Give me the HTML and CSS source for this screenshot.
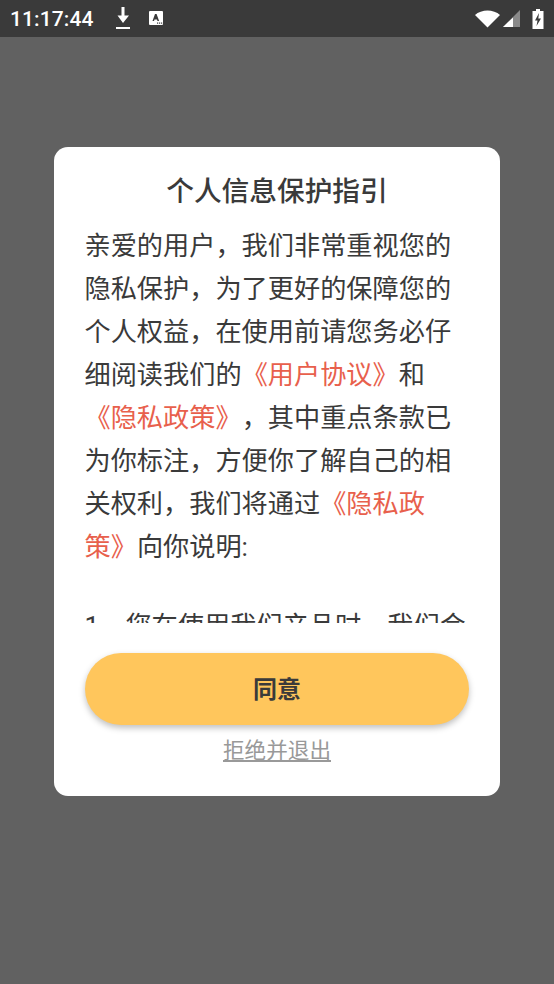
FILE: index.html
```html
<!DOCTYPE html>
<html lang="zh-CN">
<head>
    <meta charset="UTF-8">
    <meta name="viewport" content="width=device-width, initial-scale=1.0">
    <title>个人信息保护指引</title>
    <link rel="stylesheet" href="styles.css">
</head>
<body>
    <div class="status-bar">
        <div class="status-left">
            <span class="clock">11:17:44</span>
            <svg class="icon-download" width="16" height="22" viewBox="0 0 16 22">
                <path d="M6.500 0h3v8.500H14L8 16 2.500 8.500h4z" fill="#fff"/>
                <rect x="1" y="20" width="14" height="2" fill="#fff"/>
            </svg>
            <svg class="icon-app" width="16" height="16" viewBox="0 0 16 16">
                <rect x="1" y="1" width="14" height="14" rx="1" fill="#fff"/>
                <path d="M4.500 11l2.500-7h1.600l2.500 7H9.500L9 9.400H6.500L6 11z" fill="#3a3a3a"/>
                <rect x="9" y="12.500" width="1.200" height="1.200" fill="#3a3a3a"/>
                <rect x="11" y="12.500" width="1.200" height="1.200" fill="#3a3a3a"/>
                <rect x="13" y="12.500" width="1.200" height="1.200" fill="#3a3a3a"/>
            </svg>
        </div>
        <div class="status-right">
            <svg width="26" height="18" viewBox="0 0 26 18">
                <path d="M0 5C3 2 8 .5 12.500.5S22 2 25 5L12.500 17.500z" fill="#fff"/>
            </svg>
            <svg class="icon-signal" width="18" height="18" viewBox="0 0 18 18">
                <path d="M17 0v17H0z" fill="#8a8a8a"/>
                <path d="M10 7.500V17H0z" fill="#fff"/>
            </svg>
            <svg class="icon-battery" width="12" height="20" viewBox="0 0 12 20">
                <path d="M4 0h4v2h3.500v18H.500V2H4z" fill="#fff"/>
                <path d="M7 4L3 11.500h2.500L4.500 17 9 9.500H6.300z" fill="#3a3a3a"/>
            </svg>
        </div>
    </div>

    <div class="page">
        <div class="dialog">
            <h1>个人信息保护指引</h1>
            <div class="content">
                <p>亲爱的用户，我们非常重视您的隐私保护，为了更好的保障您的个人权益，在使用前请您务必仔细阅读我们的<a>《用户协议》</a>和<a>《隐私政策》</a>，其中重点条款已为你标注，方便你了解自己的相关权利，我们将通过<a>《隐私政策》</a>向你说明:</p>
                <p>1、您在使用我们产品时，我们会</p>
            </div>
            <button class="agree">同意</button>
            <a class="refuse">拒绝并退出</a>
        </div>
    </div>
</body>
</html>
```

FILE: styles.css
```css
* {
    box-sizing: border-box;
}
body {
    margin: 0;
    height: 984px;
    overflow: hidden;
    background-color: #616161;
    font-family: Roboto, "Noto Sans CJK SC", sans-serif;
    color: #3a3a3a;
}
.status-bar {
    height: 37px;
    background-color: #3a3a3a;
    color: #fff;
    display: flex;
    justify-content: space-between;
    align-items: center;
    padding: 0 10px;
}
.status-left, .status-right {
    display: flex;
    align-items: center;
}
.clock {
    font-size: 21px;
    font-weight: 500;
    letter-spacing: 0.1px;
}
.icon-download {
    margin-left: 21px;
    margin-top: -1px;
}
.icon-app {
    margin-left: 17px;
    margin-top: -1px;
}
.icon-signal {
    margin-left: 2px;
    margin-top: 1px;
}
.icon-battery {
    margin-left: 11px;
}
.page {
    padding: 110px 54px 0;
}
.dialog {
    height: 649px;
    background-color: #fff;
    border-radius: 14px;
    padding: 25px 31px 0;
    display: flex;
    flex-direction: column;
    align-items: center;
}
h1 {
    margin: 0;
    font-size: 27.700px;
    line-height: 40px;
    font-weight: 500;
    text-align: center;
}
.content {
    width: 100%;
    height: 398px;
    margin-top: 13px;
    margin-left: -1px;
    overflow: hidden;
    font-size: 26.200px;
    line-height: 43px;
    text-spacing-trim: space-all;
}
.content p {
    margin: 0 0 36px;
}
.content a {
    color: #e8604c;
}
.agree {
    width: 384px;
    height: 72px;
    flex: none;
    margin-top: 30px;
    padding-bottom: 5px;
    border: 0;
    border-radius: 36px;
    background-color: #ffc65c;
    box-shadow: 0 3px 6px rgba(0, 0, 0, 0.25);
    color: #3a3a3a;
    font-family: inherit;
    font-size: 24px;
    font-weight: 700;
}
.refuse {
    margin-top: 10px;
    font-size: 21.600px;
    line-height: 32px;
    color: #999;
    text-decoration: underline;
}
```
